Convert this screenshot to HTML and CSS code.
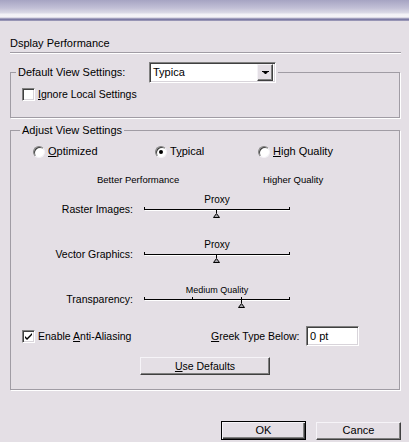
FILE: index.html
```html
<!DOCTYPE html>
<html>
<head>
<meta charset="utf-8">
<title>Display Performance</title>
<link rel="stylesheet" href="styles.css">
</head>
<body>
<div class="titlebar"></div>
<div class="main">
  <h1 class="title">Dsplay Performance</h1>

  <fieldset class="group g1">
    <legend class="legend1">
      <span class="lbl-default">Default View Settings:</span>
      <span class="select">
        <span class="select-text">Typica</span>
        <span class="select-btn"><svg width="7" height="4" viewBox="0 0 7 4"><path d="M0 0h7v1h-1l-2 2h-1l-2-2h-1z" fill="#000"/></svg></span>
      </span>
    </legend>
    <div class="check-row ignore">
      <span class="checkbox"></span>
      <span class="check-text"><u>I</u>gnore Local Settings</span>
    </div>
  </fieldset>

  <fieldset class="group g2">
    <legend class="legend2">Adjust View Settings</legend>

    <div class="radio-row">
      <div class="radio-item w1"><span class="radio"></span><span><u>O</u>ptimized</span></div>
      <div class="radio-item w2"><span class="radio on"></span><span>T<u>y</u>pical</span></div>
      <div class="radio-item"><span class="radio"></span><span><u>H</u>igh Quality</span></div>
    </div>

    <div class="scale">
      <span class="scale-left">Better Performance</span>
      <span>Higher Quality</span>
    </div>

    <div class="slider-row first">
      <span class="slider-label">Raster Images:</span>
      <div class="slider">
        <div class="slider-caption">Proxy</div>
        <svg class="slider-svg" width="146" height="14" viewBox="0 0 146 14">
          <path d="M0 4.5h146" stroke="#000"/>
          <path d="M1 5.5h145" stroke="#fff"/>
          <path d="M0.5 2v3M145.5 2v3" stroke="#000"/>
          <path d="M72.5 5v3" stroke="#000"/>
          <path d="M69.5 12.5L72.5 8.5L75.5 12.5Z" fill="#a4a2a8" stroke="#000"/>
        </svg>
      </div>
    </div>

    <div class="slider-row">
      <span class="slider-label">Vector Graphics:</span>
      <div class="slider">
        <div class="slider-caption">Proxy</div>
        <svg class="slider-svg" width="146" height="14" viewBox="0 0 146 14">
          <path d="M0 4.5h146" stroke="#000"/>
          <path d="M1 5.5h145" stroke="#fff"/>
          <path d="M0.5 2v3M145.5 2v3" stroke="#000"/>
          <path d="M72.5 5v3" stroke="#000"/>
          <path d="M69.5 12.5L72.5 8.5L75.5 12.5Z" fill="#a4a2a8" stroke="#000"/>
        </svg>
      </div>
    </div>

    <div class="slider-row">
      <span class="slider-label">Transparency:</span>
      <div class="slider">
        <div class="slider-caption small">Medium Quality</div>
        <svg class="slider-svg" width="146" height="14" viewBox="0 0 146 14">
          <path d="M0 4.5h146" stroke="#000"/>
          <path d="M1 5.5h145" stroke="#fff"/>
          <path d="M0.5 2v3M145.5 2v3M48.5 2v3" stroke="#000"/>
          <path d="M97.5 2v6" stroke="#000"/>
          <path d="M94.5 12.5L97.5 8.5L100.5 12.5Z" fill="#a4a2a8" stroke="#000"/>
        </svg>
      </div>
    </div>

    <div class="aa-row">
      <div class="check-row aa">
        <span class="checkbox checked"><svg width="9" height="9" viewBox="0 0 9 9"><path d="M1 4l2 2l5-5v2l-5 5l-2-2z" fill="#000"/></svg></span>
        <span class="check-text">Enable <u>A</u>nti-Aliasing</span>
      </div>
      <span class="greek-label"><u>G</u>reek Type Below:</span>
      <span class="field">0 pt</span>
    </div>

    <div class="defaults-row">
      <span class="btn btn-defaults"><u>U</u>se Defaults</span>
    </div>
  </fieldset>

  <div class="footer">
    <span class="btn btn-ok">OK</span>
    <span class="btn btn-cancel">Cance</span>
  </div>
</div>
</body>
</html>
```

FILE: styles.css
```css
html, body {
  margin: 0;
  padding: 0;
}
body {
  width: 409px;
  height: 442px;
  overflow: hidden;
  background: #e4dfe5;
  color: #000;
  font-family: "Liberation Sans", Arial, sans-serif;
  font-size: 10.5px;
  line-height: 13px;
}
u {
  text-decoration: underline;
  text-underline-offset: 1px;
}

.titlebar {
  height: 21px;
  background: linear-gradient(to bottom,
    #a6a4c2 0px, #c2c0d6 8px, #dcdbe7 13px, #f2f1f6 14px, #f4f3f7 17px,
    #c6c4d6 18px, #7c7aa4 19px, #7c7aa4 20px, #b3b0c6 21px);
}

.main {
  padding: 0 8px 0 10px;
}

.title {
  margin: 0;
  padding: 16px 0 2px 0;
  font-size: 11px;
  font-weight: normal;
  line-height: 13px;
  border-bottom: 1px solid #a09ca4;
  box-shadow: 0 1px 0 #fff;
}

.group {
  margin: 0 1px 0 0;
  padding: 0;
  min-width: 0;
  border: 1px solid #a09ca4;
  box-shadow: 1px 1px 0 #fff;
}

.g1 {
  margin-top: 9px;
  padding: 5px 0 16px 0;
}

.legend1 {
  display: flex;
  align-items: center;
  height: 21px;
  margin-left: 5px;
  padding: 0 2px;
  font-size: 11px;
}
.lbl-default {
  width: 131px;
}
.select {
  display: flex;
  align-items: center;
  box-sizing: border-box;
  width: 127px;
  height: 21px;
  background: #fff;
  border: 1px solid;
  border-color: #808080 #fff #fff #808080;
  box-shadow: inset 1px 1px 0 #404040, inset -1px -1px 0 #d8d4da;
}
.select-text {
  flex: 1;
  padding-left: 3px;
  font-size: 11px;
}
.select-btn {
  display: flex;
  align-items: center;
  justify-content: center;
  box-sizing: border-box;
  width: 16px;
  height: 17px;
  margin-right: 2px;
  background: #e4dfe5;
  border: 1px solid;
  border-color: #f4f2f6 #404040 #404040 #f4f2f6;
  box-shadow: inset -1px -1px 0 #808080;
}

.check-row {
  display: flex;
  align-items: center;
  height: 13px;
}
.check-row.ignore {
  margin-left: 11px;
}
.checkbox {
  display: flex;
  align-items: center;
  justify-content: center;
  box-sizing: border-box;
  width: 13px;
  height: 13px;
  background: #fff;
  border: 1px solid;
  border-color: #808080 #fff #fff #808080;
  box-shadow: inset 1px 1px 0 #404040, inset -1px -1px 0 #d8d4da;
}
.check-text {
  margin-left: 3px;
}

.g2 {
  margin-top: 6px;
  padding: 8px 0 14px 0;
}
.legend2 {
  height: 13px;
  margin-left: 9px;
  padding: 0 2px;
  font-size: 11px;
  line-height: 13px;
}

.radio-row {
  display: flex;
  align-items: center;
  height: 13px;
  padding-left: 22px;
  font-size: 11px;
}
.radio-item {
  display: flex;
  align-items: center;
}
.w1 { width: 122px; }
.w2 { width: 103px; }
.radio {
  position: relative;
  box-sizing: border-box;
  width: 12px;
  height: 12px;
  margin-right: 3px;
  border-radius: 50%;
  background: #fff;
  border: 1px solid;
  border-color: #808080 #f4f2f6 #f4f2f6 #808080;
  box-shadow: inset 1px 1px 0 #404040;
}
.radio.on::after {
  content: "";
  position: absolute;
  left: 3px;
  top: 3px;
  width: 4px;
  height: 4px;
  border-radius: 50%;
  background: #000;
}

.scale {
  display: flex;
  margin-top: 16px;
  padding-left: 86px;
  font-size: 9.5px;
  line-height: 11px;
}
.scale-left {
  width: 166px;
}

.slider-row {
  display: flex;
  align-items: flex-start;
  margin-top: 21px;
}
.slider-row.first {
  margin-top: 10px;
}
.slider-label {
  width: 122px;
  margin-top: 8px;
  margin-right: 11px;
  text-align: right;
}
.slider {
  width: 146px;
}
.slider-caption {
  height: 10px;
  font-size: 10px;
  line-height: 10px;
  text-align: center;
}
.slider-caption.small {
  font-size: 9px;
}
.slider-svg {
  display: block;
}

.aa-row {
  display: flex;
  align-items: center;
  height: 20px;
  margin-top: 17px;
  padding-left: 11px;
}
.aa {
  width: 189px;
}
.greek-label {
  width: 89px;
  white-space: nowrap;
}
.field {
  display: flex;
  align-items: center;
  box-sizing: border-box;
  width: 53px;
  height: 20px;
  margin-left: 6px;
  padding-left: 3px;
  background: #fff;
  border: 1px solid;
  border-color: #808080 #fff #fff #808080;
  box-shadow: inset 1px 1px 0 #404040, inset -1px -1px 0 #d8d4da;
  font-size: 11px;
}

.defaults-row {
  display: flex;
  justify-content: center;
  margin-top: 11px;
}

.btn {
  display: flex;
  align-items: center;
  justify-content: center;
  box-sizing: border-box;
  background: #e4dfe5;
  border: 1px solid;
  border-color: #f6f4f8 #404040 #404040 #f6f4f8;
  box-shadow: inset -1px -1px 0 #808080;
}
.btn-defaults {
  width: 130px;
  height: 18px;
}

.footer {
  display: flex;
  justify-content: flex-end;
  align-items: center;
  gap: 10px;
  height: 19px;
  margin-top: 31px;
  font-size: 11px;
}
.btn-ok {
  width: 85px;
  height: 19px;
  border: 1px solid #000;
  box-shadow: inset 1px 1px 0 #f6f4f8, inset -1px -1px 0 #404040, inset -2px -2px 0 #808080;
}
.btn-cancel {
  width: 85px;
  height: 18px;
}
```
